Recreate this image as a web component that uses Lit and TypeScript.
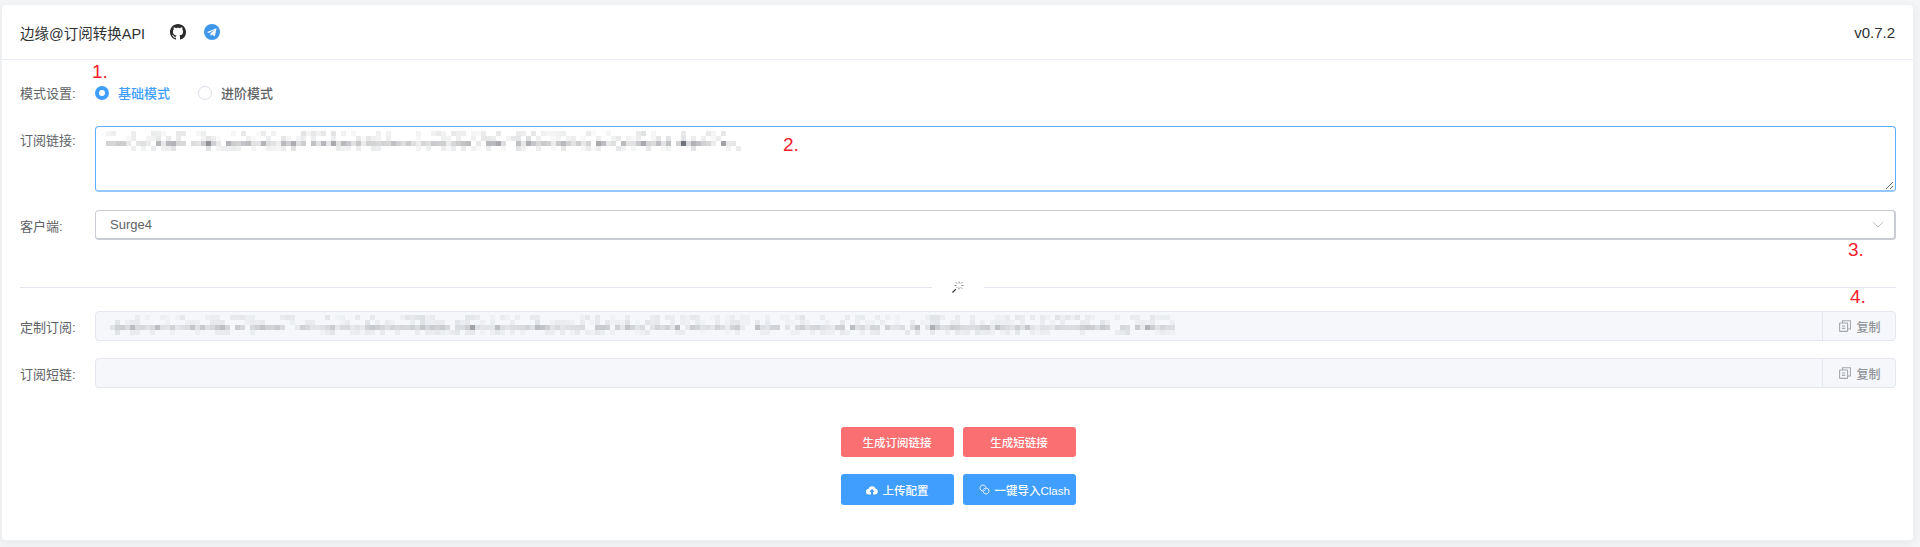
import { LitElement, html, css, svg } from "lit";
import { customElement } from "lit/decorators.js";

function mosaic(width: number, height: number, seed: number, cell: number, base: number) {
  let s = seed;
  const rnd = () => {
    s = (s * 1664525 + 1013904223) >>> 0;
    return s / 4294967296;
  };
  const cols = Math.floor(width / cell);
  const rows = Math.floor(height / cell);
  const out = [];
  for (let c = 0; c < cols; c++) {
    const strength = 0.3 + rnd() * 0.7;
    const spot = rnd() > 0.93 ? 1.7 : 1;
    for (let r = 0; r < rows; r++) {
      const isMid = r === Math.floor(rows / 2);
      const v = rnd();
      if (!isMid && v > 0.45) continue;
      if (isMid && v > 0.88) continue;
      const o = base * strength * (isMid ? spot : 0.35) * (0.5 + rnd() * 0.6);
      out.push(svg`<rect x=${c * cell} y=${r * cell} width=${cell} height=${cell} fill="#6f7278" opacity=${o.toFixed(3)}></rect>`);
    }
  }
  return html`<svg class="mosaic" width=${width} height=${height} viewBox="0 0 ${width} ${height}">${out}</svg>`;
}

const copyIcon = html`<svg class="copy" viewBox="0 0 12 12" width="12" height="12" fill="none" stroke="#a4a8ae" stroke-width="1.1">
  <rect x=".6" y="3" width="8" height="8.400" rx=".5"></rect>
  <path d="M3.500 3V.7h8v8.300H8.600"></path>
  <path d="M3 6h3.200M3 8.400h3.200"></path>
</svg>`;

@customElement("app-root")
export class AppRoot extends LitElement {
  static styles = css`
    :host {
      display: block;
      box-sizing: border-box;
      height: 547px;
      padding: 4px 6px 6px 1px;
      background: #f4f5f7;
      font-family: "Liberation Sans", "Noto Sans CJK SC", sans-serif;
      color: #606266;
      position: relative;
      overflow: hidden;
    }
    .card {
      height: 537px;
      box-sizing: border-box;
      background: #fff;
      border: 1px solid #eef0f4;
      border-radius: 4px;
      box-shadow: 0 2px 8px rgba(0, 0, 0, 0.06);
    }
    .header {
      height: 55px;
      box-sizing: border-box;
      border-bottom: 1px solid #ebeef5;
      display: flex;
      align-items: center;
      padding: 0 18px 0 18px;
      color: #303133;
    }
    .title { font-size: 14.5px; }
    .gh { margin-left: 25px; display: block; }
    .tg { margin-left: 18px; display: block; }
    .version { margin-left: auto; font-size: 15px; }
    .body { padding: 17px 17px 0 18px; }
    .row {
      display: grid;
      grid-template-columns: 75px 1fr;
      align-items: center;
      margin-bottom: 18px;
      font-size: 14px;
    }
    .row.tight { margin-bottom: 17px; }
    .row.top { align-items: start; }
    .row.top .label { padding-top: 4px; }
    .label { font-size: 13px; color: #606266; }
    .radios { display: flex; align-items: center; height: 31px; }
    .radio { display: flex; align-items: center; font-size: 13px; font-weight: 500; margin-right: 28px; }
    .dot {
      width: 14px;
      height: 14px;
      box-sizing: border-box;
      border-radius: 50%;
      border: 1px solid #dcdfe6;
      background: #fff;
      margin-right: 9px;
    }
    .radio.on { color: #409eff; }
    .radio.on .dot { border: 4.5px solid #409eff; }
    .area {
      height: 66px;
      box-sizing: border-box;
      border: 1px solid #5eaeff;
      border-bottom: 2px solid #93c7ff;
      border-radius: 4px;
      position: relative;
      padding: 4px 0 0 10px;
    }
    .mosaic { display: block; }
    .grip { position: absolute; right: 1px; bottom: 0; }
    .select {
      height: 30px;
      box-sizing: border-box;
      border: 1px solid #c9ccd2;
      border-bottom-width: 2px;
      border-right-width: 2px;
      border-radius: 4px;
      display: flex;
      align-items: center;
      justify-content: space-between;
      padding: 0 10px 0 14px;
      font-size: 13px;
      color: #606266;
    }
    .divider {
      display: flex;
      align-items: center;
      margin: 37px 0 14px;
      height: 20px;
    }
    .divider i { flex: 1; height: 1px; background: #e4e7ed; }
    .divider svg { margin: 0 20px; display: block; }
    .group {
      height: 30px;
      box-sizing: border-box;
      display: flex;
      border: 1px solid #e4e7ed;
      border-radius: 4px;
      background: #f5f7fa;
      overflow: hidden;
    }
    .value { flex: 1; padding: 3px 0 0 14px; min-width: 0; }
    .append {
      width: 73px;
      box-sizing: border-box;
      border-left: 1px solid #e4e7ed;
      display: flex;
      align-items: center;
      justify-content: center;
      gap: 5px;
      font-size: 12px;
      font-weight: 500;
      color: #909399;
      padding-left: 2px;
    }
    .buttons { display: flex; flex-direction: column; align-items: center; gap: 17px; margin-top: 39px; }
    .btn-row { display: flex; gap: 9px; }
    .btn {
      width: 113px;
      box-sizing: border-box;
      border-radius: 3px;
      color: #fff;
      font-size: 11.5px;
      font-weight: 500;
      display: flex;
      align-items: center;
      justify-content: center;
      white-space: nowrap;
    }
    .btn.red { background: #fa6f71; height: 30px; }
    .btn.blue { background: #409eff; height: 31px; }
    .btn svg { margin-right: 5px; display: block; flex: none; }
    .btn.shift { justify-content: flex-start; padding-left: 16px; }
    .note {
      position: absolute;
      color: #f5222d;
      font-size: 19px;
      line-height: 20px;
    }
    .n1 { left: 92px; top: 62px; }
    .n2 { left: 783px; top: 135px; }
    .n3 { left: 1848px; top: 240px; }
    .n4 { left: 1850px; top: 287px; }
  `;

  render() {
    return html`
      <div class="card">
        <div class="header">
          <span class="title">边缘@订阅转换API</span>
          <svg class="gh" width="16" height="16" viewBox="0 0 16 16" fill="#2b2b2b">
            <path d="M8 0C3.58 0 0 3.58 0 8c0 3.54 2.29 6.53 5.47 7.59.4.07.55-.17.55-.38 0-.19-.01-.82-.01-1.49-2.01.37-2.53-.49-2.69-.94-.09-.23-.48-.94-.82-1.13-.28-.15-.68-.52-.01-.53.63-.01 1.08.58 1.23.82.72 1.21 1.87.87 2.33.66.07-.52.28-.87.51-1.07-1.78-.2-3.64-.89-3.64-3.95 0-.87.31-1.59.82-2.15-.08-.2-.36-1.02.08-2.12 0 0 .67-.21 2.2.82.64-.18 1.32-.27 2-.27s1.36.09 2 .27c1.53-1.04 2.2-.82 2.2-.82.44 1.1.16 1.92.08 2.12.51.56.82 1.27.82 2.15 0 3.07-1.87 3.75-3.65 3.95.29.25.54.73.54 1.48 0 1.07-.01 1.93-.01 2.2 0 .21.15.46.55.38A8.01 8.01 0 0 0 16 8c0-4.42-3.58-8-8-8z"></path>
          </svg>
          <svg class="tg" width="16" height="16" viewBox="0 0 16 16">
            <circle cx="8" cy="8" r="8" fill="#3f97ea"></circle>
            <path d="M3.200 7.900l8.600-3.500c.4-.15.75.1.62.7l-1.450 6.600c-.1.45-.4.56-.8.35L8 10.500l-1.100 1.050c-.13.13-.3.22-.5.2l.16-2.250L10.400 5.800c.18-.16-.04-.25-.27-.1L5 8.900l-1.850-.6c-.4-.12-.4-.3.05-.4z" fill="#fff"></path>
          </svg>
          <span class="version">v0.7.2</span>
        </div>
        <div class="body">
          <div class="row">
            <span class="label">模式设置:</span>
            <div class="radios">
              <span class="radio on"><span class="dot"></span>基础模式</span>
              <span class="radio"><span class="dot"></span>进阶模式</span>
            </div>
          </div>
          <div class="row top">
            <span class="label">订阅链接:</span>
            <div class="area">
              ${mosaic(636, 20, 71, 5, 0.62)}
              <svg class="grip" width="9" height="9" viewBox="0 0 9 9" stroke="#6d6f73" stroke-width="1">
                <path d="M1 8L8 1M5 8l3-3"></path>
              </svg>
            </div>
          </div>
          <div class="row">
            <span class="label">客户端:</span>
            <div class="select">
              <span>Surge4</span>
              <svg width="12" height="7" viewBox="0 0 12 7" fill="none" stroke="#c0c4cc" stroke-width="1"><path d="M1 1l5 5 5-5"></path></svg>
            </div>
          </div>
          <div class="divider">
            <i></i>
            <svg width="12" height="12" viewBox="0 0 12 12" fill="none">
              <path d="M.5 11.500L3.800 8.200" stroke="#303133" stroke-width="1.200"></path>
              <path d="M7 .5v2M7 6.500v2M2.500 4.500h2M9.500 4.500h2M3.800 1.300l1.300 1.400M8.800 6.300l1.400 1.400M10.200 1.300L8.800 2.700M5.200 6.300L4.500 7" stroke="#85888d" stroke-width="1"></path>
            </svg>
            <i></i>
          </div>
          <div class="row tight">
            <span class="label">定制订阅:</span>
            <div class="group">
              <div class="value">${mosaic(1068, 20, 2024, 5, 0.42)}</div>
              <div class="append">${copyIcon}复制</div>
            </div>
          </div>
          <div class="row">
            <span class="label">订阅短链:</span>
            <div class="group">
              <div class="value"></div>
              <div class="append">${copyIcon}复制</div>
            </div>
          </div>
          <div class="buttons">
            <div class="btn-row">
              <div class="btn red">生成订阅链接</div>
              <div class="btn red">生成短链接</div>
            </div>
            <div class="btn-row">
              <div class="btn blue">
                <svg width="12" height="10" viewBox="0 0 12 10" fill="#fff">
                  <path d="M3 9.500H2.800A2.700 2.700 0 0 1 2.400 4.100 3.700 3.700 0 0 1 9.500 3.600 3 3 0 0 1 9.200 9.500H7V7h1.600L6 3.800 3.400 7H5v2.500z"></path>
                </svg>上传配置
              </div>
              <div class="btn blue shift">
                <svg width="11" height="11" viewBox="0 0 11 11" fill="none" stroke="#fff" stroke-width=".9" stroke-linecap="round">
                  <path d="M6.500 5.700A3 3 0 1 1 6.900 3.200"></path>
                  <path d="M4.500 5.300A3 3 0 1 1 4.100 7.800"></path>
                </svg>一键导入Clash
              </div>
            </div>
          </div>
        </div>
      </div>
      <span class="note n1">1.</span>
      <span class="note n2">2.</span>
      <span class="note n3">3.</span>
      <span class="note n4">4.</span>
    `;
  }
}
